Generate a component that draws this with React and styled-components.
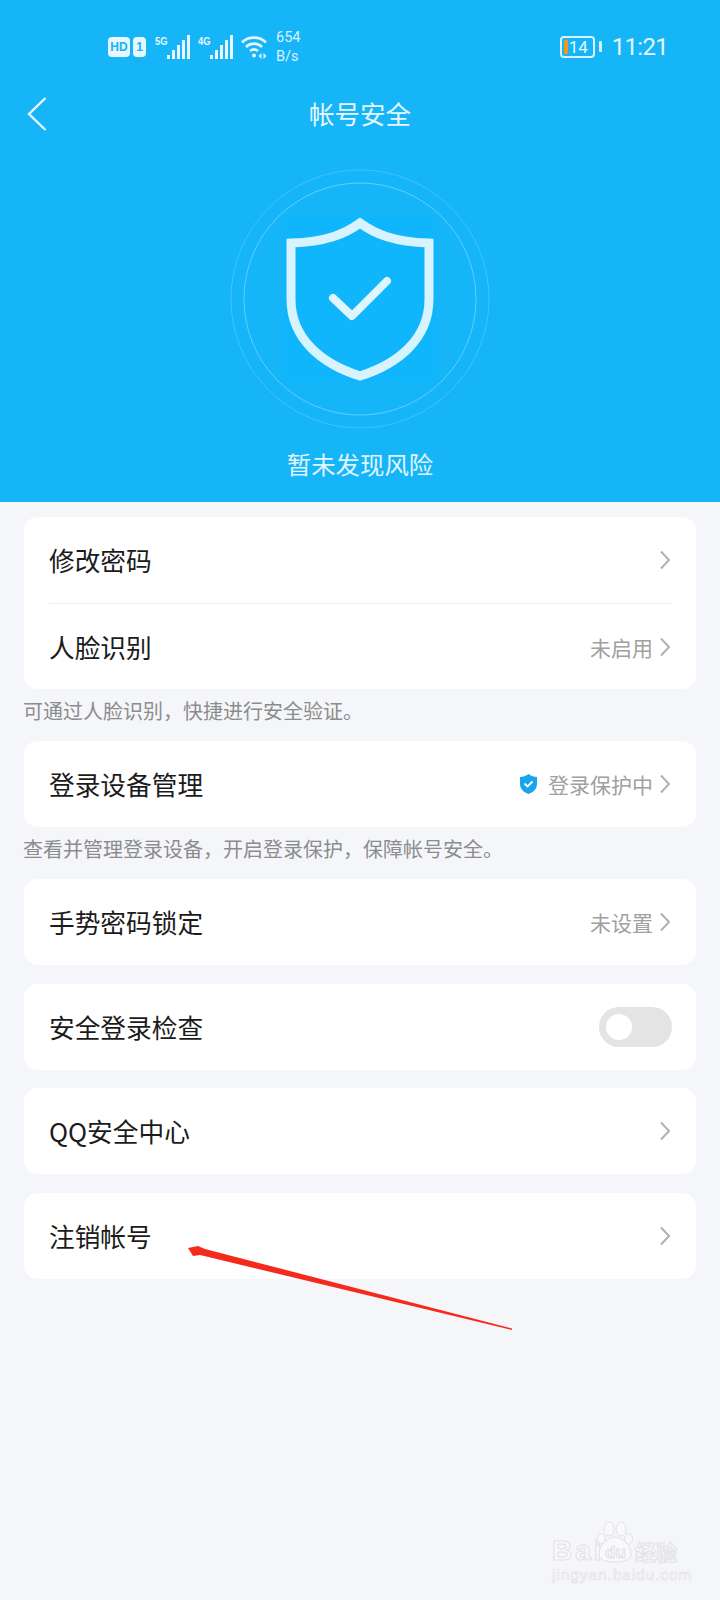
import React from 'react';
import styled, { createGlobalStyle } from 'styled-components';

const GlobalStyle = createGlobalStyle`
  html, body {
    margin: 0;
    padding: 0;
    background: #f5f6f9;
    font-family: "Noto Sans CJK SC", "Liberation Sans", sans-serif;
  }
`

const Page = styled.div`
  position: relative;
  width: 720px;
  height: 1600px;
  overflow: hidden;
  background: #f5f6f9;
`

const Header = styled.header`
  height: 502px;
  background: #15b5f8;
  color: #fff;
  display: flex;
  flex-direction: column;
`

const StatusBar = styled.div`
  height: 70px;
  padding: 23px 52px 0 108px;
  box-sizing: border-box;
  display: flex;
  align-items: center;
  color: #e6f7ff;
`

const Sim = styled.div`
  display: flex;
  gap: 3px;
  align-items: center;
  margin-right: 9px;
`

const SimBadge = styled.span`
  height: 20px;
  width: ${props => props.$wide ? '22px' : '13px'};
  border-radius: 4px;
  background: #e6f7ff;
  color: #15b5f8;
  font: 700 12px/20px "Liberation Sans", sans-serif;
  text-align: center;
`

const Signal = styled.div`
  display: flex;
  align-items: flex-start;
  height: 24px;
  margin-right: 8px;
`

const SignalLabel = styled.span`
  width: 12px;
  font: 700 11px/12px "Liberation Sans", sans-serif;
  transform: scaleX(0.85);
  transform-origin: left;
`

const Speed = styled.div`
  width: 30px;
  margin-left: 9px;
  font: 400 14.5px/19px Roboto, sans-serif;
  color: #d8f1fe;
`

const StatusRight = styled.div`
  margin-left: auto;
  display: flex;
  align-items: center;
  gap: 10px;
`

const Battery = styled.div`
  display: flex;
  align-items: center;
  gap: 4px;
`

const BatteryBody = styled.div`
  width: 35px;
  height: 22px;
  box-sizing: border-box;
  border: 2px solid #d8f1fe;
  border-radius: 4px;
  display: flex;
  align-items: center;
  padding-left: 2px;
  font: 400 17px/16px Roboto, sans-serif;
`

const BatteryFill = styled.span`
  width: 4px;
  height: 14px;
  background: #f7931e;
  margin-right: 1px;
`

const BatteryCap = styled.span`
  width: 3px;
  height: 11px;
  background: #d8f1fe;
  border-radius: 1px;
`

const Clock = styled.span`
  font: 400 24px/28px Roboto, sans-serif;
  letter-spacing: -0.7px;
  color: #e6f7ff;
`

const NavBar = styled.div`
  position: relative;
  height: 86px;
  padding-bottom: 2px;
  box-sizing: border-box;
  display: flex;
  align-items: center;
  justify-content: center;
`

const BackIcon = styled.svg`
  position: absolute;
  left: 26px;
  top: 26px;
`

const Title = styled.h1`
  margin: 0;
  font-size: 25.5px;
  font-weight: 400;
  color: #e8f8ff;
`

const Hero = styled.div`
  margin-top: 13px;
  display: flex;
  flex-direction: column;
  align-items: center;
`

const HeroText = styled.div`
  margin-top: 17px;
  font-size: 24.4px;
  line-height: 36px;
  color: #e0f5ff;
`

const Content = styled.main`
  padding: 15px 24px 0;
  display: flex;
  flex-direction: column;
`

const Card = styled.section`
  background: #fff;
  border-radius: 14px;
  margin-bottom: ${props => props.$gap ?? 18}px;
`

const Row = styled.div`
  height: ${props => props.$h || 86}px;
  padding: 0 26px 0 25px;
  display: flex;
  align-items: center;
`

const Label = styled.span`
  font-size: 25.7px;
  line-height: 36px;
  color: #1b1b1b;
`

const Right = styled.div`
  margin-left: auto;
  display: flex;
  align-items: center;
  gap: 7px;
`

const Value = styled.span`
  font-size: 21px;
  color: #a0a0a0;
`

const SmallShield = styled.svg`
  margin-right: 3px;
`

const Divider = styled.div`
  height: 1px;
  margin: 0 24px 0 25px;
  background: #ececec;
`

const Hint = styled.p`
  margin: 0 0 0 -1px;
  height: 52px;
  font-size: 20px;
  line-height: 44px;
  color: #8c8c8c;
`

const Toggle = styled.div`
  width: 73px;
  height: 40px;
  box-sizing: border-box;
  padding: 7px;
  margin-right: -2px;
  border-radius: 20px;
  background: #e4e4e4;
`

const Knob = styled.div`
  width: 26px;
  height: 26px;
  border-radius: 50%;
  background: #fff;
`

const ArrowMark = styled.svg`
  position: absolute;
  left: 180px;
  top: 1240px;
`

const Watermark = styled.div`
  position: absolute;
  left: 552px;
  top: 1520px;
  width: 134px;
  color: #f9f9fb;
  -webkit-text-stroke: 1px #e2e2e6;
`

const BaiRow = styled.div`
  display: flex;
  align-items: flex-end;
  height: 43px;
`

const BaiText = styled.span`
  width: 45px;
  margin-bottom: -5px;
  font: 700 28px/34px "Liberation Sans", sans-serif;
  letter-spacing: 3px;
`

const JingText = styled.span`
  margin: 0 0 -3px 2px;
  font-size: 21px;
  line-height: 30px;
  font-weight: 700;
`

const DuText = styled.span`
  position: absolute;
  left: 53px;
  top: 24px;
  font: 700 17px/18px "Liberation Sans", sans-serif;
`

const PawIcon = styled.svg`
  flex-shrink: 0;
`

const Domain = styled.div`
  margin-top: 3px;
  font: 400 15.5px/18px "Liberation Sans", sans-serif;
  letter-spacing: 0.9px;
  white-space: nowrap;
  -webkit-text-stroke: 0.6px #e2e2e6;
`

const Chevron = () => (
  <svg width="10" height="20" viewBox="0 0 10 20" fill="none">
    <path d="M1 1.5 L9 10 L1 18.5" stroke="#b2b2b2" strokeWidth="2" />
  </svg>
)

const Bars = () => (
  <svg width="23" height="24" viewBox="0 0 23 24" fill="#e6f7ff">
    <rect x="0" y="20" width="3" height="4" />
    <rect x="5" y="15" width="3" height="9" />
    <rect x="10" y="10" width="3" height="14" />
    <rect x="15" y="5" width="3" height="19" />
    <rect x="20" y="0" width="3" height="24" />
  </svg>
)

const App = () => {
  return (
    <Page>
      <GlobalStyle />
      <Header>
        <StatusBar>
          <Sim>
            <SimBadge $wide>HD</SimBadge>
            <SimBadge>1</SimBadge>
          </Sim>
          <Signal>
            <SignalLabel>5G</SignalLabel>
            <Bars />
          </Signal>
          <Signal>
            <SignalLabel>4G</SignalLabel>
            <Bars />
          </Signal>
          <svg width="26" height="24" viewBox="0 0 26 24" fill="none" stroke="#e6f7ff" strokeWidth="2.6">
            <path d="M1 7.5 C7.5 1 18.5 1 25 7.5" />
            <path d="M5 12 C9.5 7.5 16.5 7.5 21 12" />
            <path d="M9 16 C11.5 14 14.5 14 17 16" />
            <circle cx="13" cy="20.5" r="2" fill="#e6f7ff" stroke="none" />
            <path d="M20.5 18 v6 l-3 -3 z M22.5 18 v6 l3 -3 z" fill="#e6f7ff" stroke="none" />
          </svg>
          <Speed>654<br />B/s</Speed>
          <StatusRight>
            <Battery>
              <BatteryBody><BatteryFill />14</BatteryBody>
              <BatteryCap />
            </Battery>
            <Clock>11:21</Clock>
          </StatusRight>
        </StatusBar>
        <NavBar>
          <BackIcon width="22" height="36" viewBox="0 0 22 36" fill="none">
            <path d="M19.5 2 L3 18 L19.5 34" stroke="#e8f8ff" strokeWidth="2.4" />
          </BackIcon>
          <Title>帐号安全</Title>
        </NavBar>
        <Hero>
          <svg width="260" height="260" viewBox="0 0 260 260" fill="none">
            <circle cx="130" cy="130" r="129" stroke="#fff" strokeOpacity="0.18" />
            <circle cx="130" cy="130" r="116" stroke="#fff" strokeOpacity="0.32" />
            <rect x="54" y="45" width="152" height="168" fill="#0fb6fb" />
            <path d="M130 54 C115 65 96 73 61 74 V130 C61 170 92 195 130 207 C168 195 199 170 199 130 V74 C164 73 145 65 130 54 Z" stroke="#d6f3fe" strokeWidth="9" strokeLinejoin="miter" />
            <path d="M103 129 L122 147 L157 112" stroke="#dff5fe" strokeWidth="8" strokeLinecap="round" strokeLinejoin="round" />
          </svg>
          <HeroText>暂未发现风险</HeroText>
        </Hero>
      </Header>
      <Content>
        <Card $gap={0}>
          <Row $h={86}>
            <Label>修改密码</Label>
            <Right><Chevron /></Right>
          </Row>
          <Divider />
          <Row $h={85}>
            <Label>人脸识别</Label>
            <Right><Value>未启用</Value><Chevron /></Right>
          </Row>
        </Card>
        <Hint>可通过人脸识别，快捷进行安全验证。</Hint>
        <Card $gap={0}>
          <Row $h={86}>
            <Label>登录设备管理</Label>
            <Right>
              <SmallShield width="19" height="22" viewBox="0 0 19 22">
                <path d="M9.5 1 C7 3 4 4 1 4 V11 C1 16 5 19.5 9.5 21 C14 19.5 18 16 18 11 V4 C15 4 12 3 9.5 1 Z" fill="#17a5ee" />
                <path d="M5.5 10.5 L8.5 13.5 L13.5 8.5" stroke="#fff" strokeWidth="1.8" fill="none" />
              </SmallShield>
              <Value>登录保护中</Value>
              <Chevron />
            </Right>
          </Row>
        </Card>
        <Hint>查看并管理登录设备，开启登录保护，保障帐号安全。</Hint>
        <Card $gap={19}>
          <Row $h={86}>
            <Label>手势密码锁定</Label>
            <Right><Value>未设置</Value><Chevron /></Right>
          </Row>
        </Card>
        <Card>
          <Row $h={86}>
            <Label>安全登录检查</Label>
            <Right><Toggle><Knob /></Toggle></Right>
          </Row>
        </Card>
        <Card $gap={19}>
          <Row $h={86}>
            <Label>QQ安全中心</Label>
            <Right><Chevron /></Right>
          </Row>
        </Card>
        <Card>
          <Row $h={86}>
            <Label>注销帐号</Label>
            <Right><Chevron /></Right>
          </Row>
        </Card>
      </Content>
      <ArrowMark width="340" height="100" viewBox="0 0 340 100">
        <path d="M8 8 L18 6 L25 9 L332 88.5 L332 90 L20 15 L13 16 Z" fill="#f52a1c" />
      </ArrowMark>
      <Watermark>
        <BaiRow>
          <BaiText>Bai</BaiText>
          <PawIcon width="36" height="42" viewBox="0 0 36 42" fill="#f9f9fb" stroke="#e2e2e6" strokeWidth="1">
            <ellipse cx="4.5" cy="18" rx="4" ry="5" />
            <ellipse cx="12" cy="8" rx="5" ry="7" />
            <ellipse cx="24" cy="8" rx="5" ry="7" />
            <ellipse cx="31.5" cy="18" rx="4" ry="5" />
            <path d="M18 16 C11 16 2 24 2 33 C2 39 9 41 18 41 C27 41 34 39 34 33 C34 24 25 16 18 16 Z" />
          </PawIcon>
          <JingText>经验</JingText>
        </BaiRow>
        <DuText>du</DuText>
        <Domain>jingyan.baidu.com</Domain>
      </Watermark>
    </Page>
  );
}

export default App;
